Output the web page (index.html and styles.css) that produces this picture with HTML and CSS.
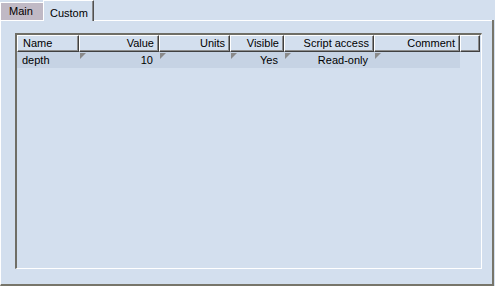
FILE: index.html
```html
<!DOCTYPE html>
<html lang="en">
<head>
    <meta charset="UTF-8">
    <title>Custom properties</title>
    <link rel="stylesheet" href="styles.css">
</head>
<body>
    <div class="tabs">
        <div class="tab">Main</div>
        <div class="tab active">Custom</div>
        <div class="tab-fill"></div>
    </div>
    <div class="panel">
        <div class="list">
            <div class="row head">
                <div class="cell left">Name</div>
                <div class="cell">Value</div>
                <div class="cell">Units</div>
                <div class="cell">Visible</div>
                <div class="cell">Script access</div>
                <div class="cell">Comment</div>
                <div class="cell"></div>
            </div>
            <div class="row data">
                <div class="cell left">depth</div>
                <div class="cell"><span class="mark"></span>10</div>
                <div class="cell"><span class="mark"></span></div>
                <div class="cell"><span class="mark"></span>Yes</div>
                <div class="cell"><span class="mark"></span>Read-only</div>
                <div class="cell"><span class="mark"></span></div>
            </div>
        </div>
    </div>
</body>
</html>
```

FILE: styles.css
```css
*, *:before, *:after {
    margin: 0;
    padding: 0;
    box-sizing: border-box;
}
body {
    width: 495px;
    height: 286px;
    background: #d3dfee;
    font-family: "Liberation Sans", Arial, sans-serif;
    font-size: 11px;
    color: #000;
    overflow: hidden;
}
.tabs {
    display: flex;
    align-items: flex-end;
    height: 21px;
    margin-right: 1px;
}
.tab {
    height: 19px;
    width: 43px;
    padding-left: 8px;
    line-height: 17px;
    background: #c0b9c5;
    border-top: 1px solid #fff;
    border-left: 1px solid #fff;
    border-bottom: 1px solid #fff;
}
.tab.active {
    height: 21px;
    width: 51px;
    padding: 4px 0 0 6px;
    line-height: 16px;
    background: #d3dfee;
    border-bottom: none;
    border-right: 1px solid #505050;
    box-shadow: inset -1px 0 #8a8a8a;
}
.tab-fill {
    flex: 1;
    height: 1px;
    background: #fff;
    border-right: 2px solid #77756a;
}
.panel {
    height: 265px;
    margin-right: 1px;
    padding: 12px 10px 15px 14px;
    border-left: 1px solid #fff;
    border-right: 2px solid #77756a;
    border-bottom: 2px solid #77756a;
}
.list {
    height: 100%;
    padding-right: 1px;
    border-style: solid;
    border-width: 2px 1px 1px 2px;
    border-color: #6f6e66 #fff #fff #6f6e66;
}
.row {
    display: grid;
    grid-template-columns: 62px 80px 71px 54px 90px 86px 1fr;
}
.head .cell {
    height: 17px;
    line-height: 15px;
    padding-right: 4px;
    border-top: 1px solid #fff;
    border-left: 1px solid #fff;
    border-right: 1px solid #404040;
    border-bottom: 1px solid #404040;
    box-shadow: inset -1px -1px #8c8c8c;
}
.data {
    width: 443px;
    grid-template-columns: 62px 80px 71px 54px 90px 86px;
    background: #c6d3e4;
}
.data .cell {
    position: relative;
    height: 16px;
    line-height: 16px;
    padding-right: 6px;
}
.cell {
    text-align: right;
    white-space: nowrap;
}
.cell.left {
    text-align: left;
    padding-left: 5px;
}
.mark {
    position: absolute;
    left: 1px;
    top: 1px;
    width: 0;
    height: 0;
    border-top: 6px solid #8a8a8a;
    border-right: 6px solid transparent;
}
```
